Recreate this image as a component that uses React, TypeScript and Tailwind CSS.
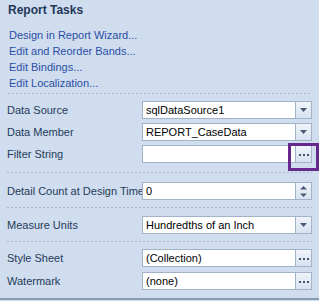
import React from 'react';

const Dashed: React.FC = () => (
    <div className="h-px bg-[linear-gradient(to_right,#a8b8cc_50%,transparent_50%)] bg-[length:4px_1px]" />
);

const DropArrow: React.FC = () => (
    <svg width="7" height="4" viewBox="0 0 7 4"><path d="M0 0h7L3.5 4z" fill="#4a5a74" /></svg>
);

const Dots: React.FC = () => (
    <svg width="10" height="2" viewBox="0 0 10 2" className="mt-[2px]">
        <rect x="0" y="0" width="2" height="2" fill="#44546e" />
        <rect x="4" y="0" width="2" height="2" fill="#44546e" />
        <rect x="8" y="0" width="2" height="2" fill="#44546e" />
    </svg>
);

const Spin: React.FC = () => (
    <svg width="7" height="11" viewBox="0 0 7 11">
        <path d="M3.5 0L7 3.5H0z" fill="#4a5a74" />
        <path d="M0 7.5h7L3.5 11z" fill="#4a5a74" />
    </svg>
);

type Kind = 'drop' | 'dots' | 'spin';

const Row: React.FC<{ label: string; value: string; kind: Kind }> = ({ label, value, kind }) => (
    <div className="flex items-center h-[18px]">
        <div className="w-[135px] shrink-0 whitespace-nowrap text-[#253b5a]">{label}</div>
        <div className="flex h-[18px] w-[170px] border border-[#a3b3c9] bg-white">
            <div className="flex-1 pl-[3px] leading-[16px] text-black whitespace-nowrap overflow-hidden">{value}</div>
            <div className="w-[16px] flex items-center justify-center border-l border-[#a3b3c9] bg-[linear-gradient(to_bottom,#f0f4fa,#d7e2f1)]">
                {kind === 'drop' && <DropArrow />}
                {kind === 'dots' && <Dots />}
                {kind === 'spin' && <Spin />}
            </div>
        </div>
    </div>
);

const App: React.FC = () => {
    return (
        <div className="relative w-[319px] h-[301px] bg-[#d0ddee] font-['Liberation_Sans',Arial,sans-serif] text-[11px] overflow-hidden">
            <div className="h-[300px] border-b-2 border-[#8a9cb4] pl-[7px] pr-[7px]">
                <div className="pt-[2px] pl-[1px]">
                    <div className="font-bold text-[12px] leading-[16px] text-[#1f3658]">Report Tasks</div>
                    <div className="mt-[9px] pl-[1px] text-[#2a4ea6] leading-[16px]">
                        <div>Design in Report Wizard...</div>
                        <div>Edit and Reorder Bands...</div>
                        <div>Edit Bindings...</div>
                        <div>Edit Localization...</div>
                    </div>
                </div>
                <div className="mt-[2px] pl-[1px]"><Dashed /></div>
                <div className="flex flex-col gap-[4px] pt-[7px] pb-[9px]">
                    <Row label="Data Source" value="sqlDataSource1" kind="drop" />
                    <Row label="Data Member" value="REPORT_CaseData" kind="drop" />
                    <Row label="Filter String" value="" kind="dots" />
                </div>
                <Dashed />
                <div className="pt-[9px] pb-[7px]">
                    <Row label="Detail Count at Design Time" value="0" kind="spin" />
                </div>
                <Dashed />
                <div className="pt-[8px] pb-[7px]">
                    <Row label="Measure Units" value="Hundredths of an Inch" kind="drop" />
                </div>
                <Dashed />
                <div className="flex flex-col gap-[5px] pt-[7px]">
                    <Row label="Style Sheet" value="(Collection)" kind="dots" />
                    <Row label="Watermark" value="(none)" kind="dots" />
                </div>
            </div>
            <div className="absolute left-[288px] top-[143px] w-[31px] h-[28px] border-[3px] border-[#67288e]" />
        </div>
    );
};

export default App;
